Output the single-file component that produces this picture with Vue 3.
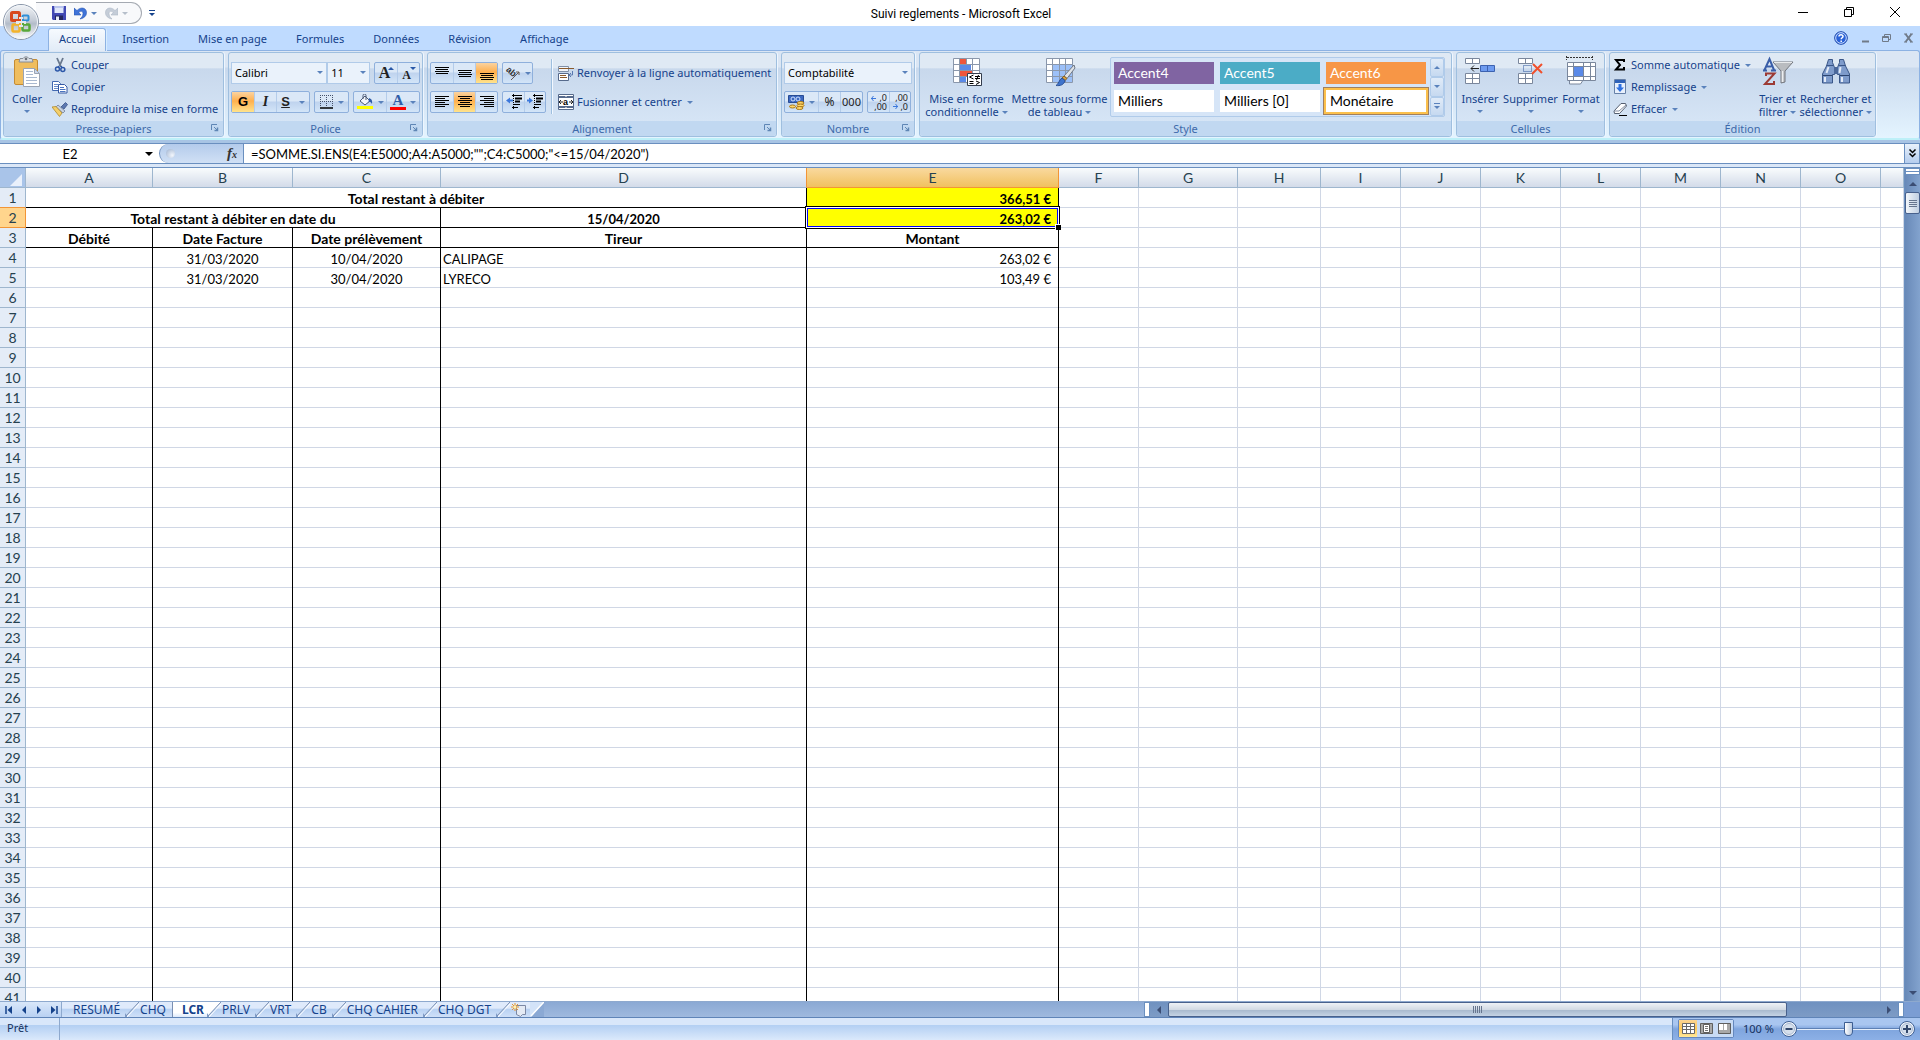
<script setup>
import { ref } from 'vue'

const ribbonTabs = ['Accueil', 'Insertion', 'Mise en page', 'Formules', 'Données', 'Révision', 'Affichage']
const activeTab = ref('Accueil')

const sheets = ['RESUMÉ', 'CHQ', 'LCR', 'PRLV', 'VRT', 'CB', 'CHQ CAHIER', 'CHQ DGT']
const activeSheet = ref('LCR')

const cellRef = ref('E2')
const formula = ref('=SOMME.SI.ENS(E4:E5000;A4:A5000;"";C4:C5000;"<=15/04/2020")')
const zoom = ref(50)

const columns = [
  { name: 'A', width: 127 },
  { name: 'B', width: 140 },
  { name: 'C', width: 148 },
  { name: 'D', width: 366 },
  { name: 'E', width: 252 },
  { name: 'F', width: 80 },
  { name: 'G', width: 99 },
  { name: 'H', width: 83 },
  { name: 'I', width: 80 },
  { name: 'J', width: 80 },
  { name: 'K', width: 80 },
  { name: 'L', width: 80 },
  { name: 'M', width: 80 },
  { name: 'N', width: 80 },
  { name: 'O', width: 80 }
]

const E = (text, cls) => ({ text, cls: 'vb ' + cls })

const content = {
  1: [
    { text: 'Total restant à débiter', span: 4, cls: 'b title c vb hb' },
    E('366,51 €', 'b r yellow hb')
  ],
  2: [
    { text: 'Total restant à débiter en date du', span: 3, cls: 'b title c vb hb' },
    { text: '15/04/2020', cls: 'b c vb hb' },
    { text: '263,02 €', cls: 'b r vb hb yellow', selected: true }
  ],
  3: ['Débité', 'Date Facture', 'Date prélèvement', 'Tireur', 'Montant'].map(text => ({ text, cls: 'b title c vb hb' })),
  4: [E('', ''), E('31/03/2020', 'c'), E('10/04/2020', 'c'), E('CALIPAGE', ''), E('263,02 €', 'r')],
  5: [E('', ''), E('31/03/2020', 'c'), E('30/04/2020', 'c'), E('LYRECO', ''), E('103,49 €', 'r')]
}

const rows = Array.from({ length: 41 }, (_, i) => {
  const n = i + 1
  const cells = content[n] || Array.from({ length: 5 }, () => E('', ''))
  return { n, cells: [...cells, ...Array.from({ length: 11 }, () => ({ text: '', cls: '' }))] }
})

const styles = [
  { name: 'Accent4', cls: 'accent4' },
  { name: 'Accent5', cls: 'accent5' },
  { name: 'Accent6', cls: 'accent6' },
  { name: 'Milliers', cls: '' },
  { name: 'Milliers [0]', cls: '' },
  { name: 'Monétaire', cls: 'chosen' }
]
</script>

<template>
  <div class="window">
    <header class="titlebar">
      <div class="quick">
        <button class="plain" aria-label="Enregistrer">
          <svg width="14" height="14" viewBox="0 0 14 14"><path d="M0 0h14v14H1l-1-1z" fill="#4148b4" /><path d="M2.500 0h9v7h-9z" fill="#dfe6fa" /><path d="M2.500 0h9v2h-9z" fill="#b9c4ee" /><path d="M3 9.500h8V14H3z" fill="#23265e" /><path d="M4 10.500h3V14H4z" fill="#e8ecf8" /></svg>
        </button>
        <button class="plain undo" aria-label="Annuler">
          <svg width="13" height="14" viewBox="0 0 13 14"><path d="M0 2v7h7L4.800 6.600C6.500 4.500 9 5 9 7.500c0 2.500-1.500 4-3 5.500 4-.8 6.700-3 6.500-6.800C12.200 1.500 6.500.5 3 4.600z" fill="#3f73d8" stroke="#2a58b4" stroke-width=".6" /></svg>
          <span class="caret"></span>
        </button>
        <button class="plain undo dim" aria-label="Rétablir">
          <svg width="13" height="14" viewBox="0 0 13 14"><path d="M13 2v7H6l2.200-2.400C6.500 4.500 4 5 4 7.500c0 2.500 1.500 4 3 5.500C3 12.200.3 10 .5 6.200.8 1.500 6.500.5 10 4.600z" fill="#b9c3d0" stroke="#9aa8ba" stroke-width=".6" /></svg>
          <span class="caret"></span>
        </button>
      </div>
      <button class="plain customize" aria-label="Personnaliser"><span class="bar"></span><span class="caret"></span></button>
      <h1>Suivi reglements - Microsoft Excel</h1>
      <div class="winbtns">
        <button class="plain" aria-label="Réduire"><svg width="12" height="12"><path d="M1 6.500h10" stroke="#000" /></svg></button>
        <button class="plain" aria-label="Restaurer"><svg width="12" height="12"><path d="M1.500 3.500h7v7h-7zM3.500 3V1.500h7v7H9" fill="none" stroke="#000" /></svg></button>
        <button class="plain" aria-label="Fermer"><svg width="12" height="12"><path d="M1 1l10 10M11 1L1 11" stroke="#000" /></svg></button>
      </div>
    </header>

    <button class="office" aria-label="Bouton Office">
      <svg width="38" height="38" viewBox="0 0 38 38">
        <defs>
          <linearGradient id="orb" x1="0" y1="0" x2="0" y2="1"><stop offset="0" stop-color="#f3f5f8" /><stop offset=".45" stop-color="#c5ccd6" /><stop offset=".55" stop-color="#b3bcc9" /><stop offset="1" stop-color="#fff" /></linearGradient>
        </defs>
        <circle cx="19" cy="19" r="17.500" fill="url(#orb)" stroke="#8895a8" />
        <circle cx="19" cy="19" r="16.500" fill="none" stroke="#f2f5f9" />
        <g fill="none">
          <rect x="9.500" y="9.500" width="8" height="8" rx="1" stroke="#d8481c" stroke-width="3" />
          <rect x="20.500" y="12.500" width="6" height="5" rx="1" stroke="#2f8fd8" stroke-width="2" />
          <rect x="10.500" y="21.500" width="7" height="7" rx="1" stroke="#f3b32a" stroke-width="2.500" />
          <rect x="20.500" y="21.500" width="7" height="6" rx="1" stroke="#58a83a" stroke-width="2.500" />
        </g>
        <path d="M14 18h10v3H14z" fill="#e3e7ec" /><path d="M17 14h4v10h-4z" fill="#e3e7ec" />
        <path d="M17 16h2v2h-2z" fill="#d8481c" /><path d="M20 16h2v2h-2z" fill="#2f8fd8" /><path d="M17 20h2v2h-2z" fill="#f3b32a" /><path d="M20 20h2v2h-2z" fill="#58a83a" />
      </svg>
    </button>

    <nav class="tabs">
      <button v-for="t in ribbonTabs" :key="t" :class="['tab', { on: t === activeTab }]" @click="activeTab = t">{{ t }}</button>
      <div class="tabtools">
        <button class="plain" aria-label="Aide"><svg width="14" height="14" viewBox="0 0 14 14"><circle cx="7" cy="7" r="6.300" fill="#2a62d8" stroke="#1d47a8" /><circle cx="7" cy="7" r="5.300" fill="none" stroke="#cfe0ff" /><path d="M5 5.500C5 3.200 9.200 3.300 9 5.500 8.900 6.800 7.200 6.800 7.200 8.300M7.200 9.500v1.500" fill="none" stroke="#fff" stroke-width="1.500" /></svg></button>
        <button class="plain" aria-label="Réduire le classeur"><svg width="10" height="12"><path d="M2 9.500h7" stroke="#707a88" stroke-width="2" /></svg></button>
        <button class="plain" aria-label="Restaurer le classeur"><svg width="10" height="12"><path d="M.5 4.500h6v5h-6zM.5 5.500h6M2.500 4V2.500h6v5H7" fill="none" stroke="#707a88" /></svg></button>
        <button class="plain" aria-label="Fermer le classeur"><svg width="10" height="12"><path d="M1.500 2l6 8M7.500 2l-6 8" stroke="#707a88" stroke-width="2" /><path d="M0 2h3M6 2h3M0 10h3M6 10h3" stroke="#707a88" /></svg></button>
      </div>
    </nav>

    <section class="ribbon">
      <div class="group g-clip">
        <div class="body">
          <button class="big">
            <svg width="32" height="32" viewBox="0 0 32 32">
              <rect x="3.500" y="3.500" width="23" height="25" rx="1.500" fill="#efbd5e" stroke="#c48b33" />
              <path d="M9 2.500h3a3.500 3.500 0 0 1 6 0h3l1 3.500H8z" fill="#d9dde2" stroke="#858c96" />
              <circle cx="15" cy="3" r="1.300" fill="#6a7078" />
              <path d="M12.500 12.500h11l5 5v13h-16z" fill="#fff" stroke="#9aa4b4" /><path d="M23.500 12.500v5h5z" fill="#cdd8ea" stroke="#9aa4b4" />
              <path d="M15 15.500h7M15 18.500h7M15 21.500h11M15 24.500h11M15 27.500h11" stroke="#a9b9d0" />
            </svg>
            <span>Coller</span><span class="caret"></span>
          </button>
          <div class="stack">
            <button class="cmd"><svg width="16" height="16" viewBox="0 0 16 16"><path d="M5 1l4 9M11 1L7.500 9" stroke="#68778c" stroke-width="1.800" /><path d="M7 9l-1 2M9 9l1 2" stroke="#2c57a8" stroke-width="1.500" /><circle cx="5.500" cy="12" r="2" fill="none" stroke="#2c57a8" stroke-width="1.500" /><circle cx="10.800" cy="12.500" r="2" fill="none" stroke="#2c57a8" stroke-width="1.500" /></svg>Couper</button>
            <button class="cmd"><svg width="16" height="16" viewBox="0 0 16 16"><path d="M.5 2.500h6l2 2v7h-8z" fill="#fff" stroke="#4268b0" /><path d="M2 5.500h4M2 7.500h4M2 9.500h4" stroke="#6a8cc8" /><path d="M6.500 5.500h6l2.500 2.500v6H6.500z" fill="#fff" stroke="#3458a4" /><path d="M8 8.500h4M8 10.500h5.500M8 12.500h5.500" stroke="#4a74c0" /></svg>Copier</button>
            <button class="cmd"><svg width="16" height="16" viewBox="0 0 16 16"><path d="M9 6l4.500-4.500 2 2L12 8z" fill="#5d79b0" stroke="#3a5388" stroke-width=".8" /><path d="M6 4l7 6-2 2-7-6z" fill="#c9d3e2" stroke="#71809a" stroke-width=".8" /><path d="M0 6l4-.5L10 12l-2.500 3.500z" fill="#f4cf6a" stroke="#b08a2c" stroke-width=".8" /></svg>Reproduire la mise en forme</button>
          </div>
        </div>
        <footer>Presse-papiers<svg class="launch" width="8" height="8"><path d="M.5 6V.5H6" fill="none" stroke="#5f86b5" /><path d="M3 3l3 3" stroke="#5f86b5" /><path d="M3.500 6.500h3v-3" fill="none" stroke="#5f86b5" stroke-width="1.500" /></svg></footer>
      </div>

      <div class="group g-font">
        <div class="body lines">
          <div class="line">
            <label class="combo wide"><select aria-label="Police"><option>Calibri</option></select><span class="caret"></span></label>
            <label class="combo size"><select aria-label="Taille de police"><option>11</option></select><span class="caret"></span></label>
            <div class="set">
              <button class="w22 glyph big-a" aria-label="Agrandir la police">A<i class="up"></i></button>
              <button class="w22 glyph small-a" aria-label="Réduire la police">A<i class="down"></i></button>
            </div>
          </div>
          <div class="line">
            <div class="set">
              <button class="w22 hot bold">G</button>
              <button class="w22 ital">I</button>
              <button class="w34 under"><u>S</u><span class="caret"></span></button>
            </div>
            <div class="set">
              <button class="w34" aria-label="Bordures"><svg width="14" height="14"><path d="M.5 0v12M12.500 0v12M6.500 0v12M0 .5h13M0 6.500h13" stroke="#44506a" stroke-dasharray="1 1" /><path d="M0 13h13" stroke="#000" stroke-width="1.500" /></svg><span class="caret"></span></button>
            </div>
            <div class="set">
              <button class="w32" aria-label="Couleur de remplissage"><svg width="17" height="16" viewBox="0 0 17 16"><path d="M3 7l5-5 5 5-5 4z" fill="#f3f6fb" stroke="#4c5a74" /><path d="M6 5V1.500A1.500 1.500 0 0 1 9 1.500V6" fill="none" stroke="#4c5a74" /><path d="M12 4c3 1 3.500 3 3 6-1-1.500-2-2.500-3.500-2z" fill="#2f5da8" /><path d="M0 12h16v3H0z" fill="#ff0" /></svg><span class="caret"></span></button>
              <button class="w34" aria-label="Couleur de police"><span class="fcolor">A</span><span class="caret"></span></button>
            </div>
          </div>
        </div>
        <footer>Police<svg class="launch" width="8" height="8"><path d="M.5 6V.5H6" fill="none" stroke="#5f86b5" /><path d="M3 3l3 3" stroke="#5f86b5" /><path d="M3.500 6.500h3v-3" fill="none" stroke="#5f86b5" stroke-width="1.500" /></svg></footer>
      </div>

      <div class="group g-align">
        <div class="body">
          <div class="lines left">
            <div class="line">
              <div class="set">
                <button class="w22" aria-label="Aligner en haut"><svg width="14" height="16"><path d="M0 2.500h14M1 4.500h12M0 6.500h14M1 8.500h12" stroke="#000" /></svg></button>
                <button class="w22" aria-label="Aligner au centre"><svg width="14" height="16"><path d="M0 5.500h14M1 7.500h12M0 9.500h14M1 11.500h12" stroke="#000" /></svg></button>
                <button class="w22 hot" aria-label="Aligner en bas"><svg width="14" height="16"><path d="M0 8.500h14M1 10.500h12M0 12.500h14M1 14.500h12" stroke="#000" /></svg></button>
              </div>
              <div class="set">
                <button class="w30" aria-label="Orientation"><svg class="loose" width="16" height="16" viewBox="0 0 16 16"><text x="1" y="8" font-size="9" font-weight="bold" font-family="Liberation Sans, sans-serif" transform="rotate(40 4 6)" fill="#333">ab</text><path d="M6 15L14 7M14 7h-3M14 7v3" stroke="#6b5a50" fill="none" /></svg><span class="caret"></span></button>
              </div>
            </div>
            <div class="line">
              <div class="set">
                <button class="w22" aria-label="Aligner à gauche"><svg width="14" height="14"><path d="M0 1.500h14M0 3.500h10M0 5.500h14M0 7.500h10M0 9.500h14M0 11.500h10" stroke="#000" /></svg></button>
                <button class="w22 hot" aria-label="Centrer"><svg width="14" height="14"><path d="M0 1.500h14M2 3.500h10M0 5.500h14M2 7.500h10M0 9.500h14M2 11.500h10" stroke="#000" /></svg></button>
                <button class="w22" aria-label="Aligner à droite"><svg width="14" height="14"><path d="M0 1.500h14M4 3.500h10M0 5.500h14M4 7.500h10M0 9.500h14M4 11.500h10" stroke="#000" /></svg></button>
              </div>
              <div class="set">
                <button class="w21" aria-label="Diminuer le retrait"><svg width="16" height="16"><path d="M6 1.500h10M6 13.500h6M8 10.500h6" stroke="#000" /><path d="M9 4.500h7M9 7.500h5" stroke="#000" stroke-width="2" /><path d="M7.500 0v16" stroke="#000" stroke-dasharray="1 1" /><path d="M0 6.500l4-3v2h3v2H4v2z" fill="#3c78dc" /></svg></button>
                <button class="w21" aria-label="Augmenter le retrait"><svg width="16" height="16"><path d="M6 1.500h10M6 13.500h6M8 10.500h6" stroke="#000" /><path d="M9 4.500h7M9 7.500h5" stroke="#000" stroke-width="2" /><path d="M7.500 0v16" stroke="#000" stroke-dasharray="1 1" /><path d="M6 6.500l-4-3v2H0v2h2v2z" fill="#3c78dc" /></svg></button>
              </div>
            </div>
          </div>
          <span class="vsep"></span>
          <div class="lines">
            <button class="cmd"><svg width="16" height="16"><path d="M.5 1.500h10v5H.5z" fill="#f2f5fa" stroke="#8090a8" /><path d="M1 3.500h15" stroke="#8a5a2c" /><path d="M.5 8.500h10v7H.5z" fill="#fff" stroke="#566a8c" /><path d="M2 10.500h6M2 12.500h7" stroke="#8a5a2c" /><path d="M14.500 6v4h-3M13 8l-2 2 2 2" fill="none" stroke="#5878b0" /></svg>Renvoyer à la ligne automatiquement</button>
            <button class="cmd"><svg width="16" height="16"><path d="M.5.500h15v15H.5z" fill="#fff" stroke="#566a8c" /><path d="M0 3h16M0 13h16" stroke="#566a8c" stroke-width="2" /><path d="M8 1v2M8 13v2" stroke="#fff" /><path d="M1 8h4M11 8h4M3 6L1 8l2 2M13 6l2 2-2 2" fill="none" stroke="#222" /><text x="5" y="11" font-size="9" font-weight="bold" font-family="Liberation Sans, sans-serif">a</text></svg>Fusionner et centrer<span class="caret"></span></button>
          </div>
        </div>
        <footer>Alignement<svg class="launch" width="8" height="8"><path d="M.5 6V.5H6" fill="none" stroke="#5f86b5" /><path d="M3 3l3 3" stroke="#5f86b5" /><path d="M3.500 6.500h3v-3" fill="none" stroke="#5f86b5" stroke-width="1.500" /></svg></footer>
      </div>

      <div class="group g-num">
        <div class="body lines">
          <div class="line">
            <label class="combo full"><select aria-label="Format de nombre"><option>Comptabilité</option></select><span class="caret"></span></label>
          </div>
          <div class="line">
            <div class="set">
              <button class="w34" aria-label="Format Nombre Comptabilité"><svg width="17" height="16"><path d="M.5 1.500h15v7H.5z" fill="#3c68c0" stroke="#284c94" /><circle cx="5" cy="5" r="2" fill="none" stroke="#cfe0ff" /><circle cx="10" cy="5" r="2" fill="none" stroke="#cfe0ff" /><ellipse cx="12.500" cy="9" rx="3.500" ry="1.500" fill="#ffd76a" stroke="#a87718" /><ellipse cx="12.500" cy="11.500" rx="3.500" ry="1.500" fill="#ffd76a" stroke="#a87718" /><ellipse cx="4.500" cy="12.500" rx="3" ry="1.500" fill="#ffd76a" stroke="#a87718" /><ellipse cx="11.500" cy="14" rx="3.500" ry="1.500" fill="#ffd76a" stroke="#a87718" /></svg><span class="caret"></span></button>
              <button class="w22 pct">%</button>
              <button class="w22 zeros">000</button>
            </div>
            <div class="set">
              <button class="w21 dec" aria-label="Ajouter une décimale"><svg class="arr" width="5" height="5"><path d="M0 2.500h5M2.500 0L.5 2.500 2.500 5" stroke="#3c78dc" fill="none" /></svg><span>,0</span><span>,00</span></button>
              <button class="w21 dec" aria-label="Réduire les décimales"><span>,00</span><span>,0</span><svg class="arr low" width="5" height="5"><path d="M0 2.500h5M2.500 0l2 2.500-2 2.500" stroke="#3c78dc" fill="none" /></svg></button>
            </div>
          </div>
        </div>
        <footer>Nombre<svg class="launch" width="8" height="8"><path d="M.5 6V.5H6" fill="none" stroke="#5f86b5" /><path d="M3 3l3 3" stroke="#5f86b5" /><path d="M3.500 6.500h3v-3" fill="none" stroke="#5f86b5" stroke-width="1.500" /></svg></footer>
      </div>

      <div class="group g-style">
        <div class="body">
          <button class="big w92">
            <svg width="32" height="32" viewBox="0 0 32 32">
              <path d="M2.500 2.500h26v24h-26z" fill="#fff" stroke="#8a97ab" />
              <path d="M9 3h6v5H9zM9 14h12v6H9z" fill="#f0563c" /><path d="M9 8h11v6H9zM9 20h6v6H9z" fill="#5b8ae8" />
              <path d="M2 8.500h27M2 14.500h27M2 20.500h27M8.500 2v25M15.500 2v6M21.500 2v25" stroke="#8a97ab" />
              <path d="M16.500 17.500h14v12h-14z" fill="#fff" stroke="#333c4c" />
              <path d="M22.500 19l-4 2 4 2M18.500 25.500h4M18.500 27.500h4M24 20.500h5M24 22.500h5M27.500 19l-2 5M25 25l3.500 1.500L25 28.500" fill="none" stroke="#000" />
            </svg>
            <span>Mise en forme</span><span>conditionnelle<i class="caret"></i></span>
          </button>
          <button class="big w92">
            <svg width="32" height="32" viewBox="0 0 32 32">
              <path d="M2.500 2.500h26v24h-26z" fill="#fff" stroke="#8a97ab" />
              <path d="M9 8h19v18H9z" fill="#9cc0f8" />
              <path d="M2 8.500h27M2 14.500h27M2 20.500h27M8.500 2v25M15.500 2v25M21.500 2v25" stroke="#8a97ab" />
              <path d="M30 9L20 20l3 2.500L31 12z" fill="#dfe3e8" stroke="#6d7684" /><path d="M20 20l3 2.500-2 2-3-2.500z" fill="#d9a040" stroke="#8b6420" /><path d="M18 22l3 2.500C20 29 16 30 12 29.500c3-1.500 3-6 6-7.500z" fill="#3f74cc" stroke="#2a5098" />
            </svg>
            <span>Mettre sous forme</span><span>de tableau<i class="caret"></i></span>
          </button>
          <div class="gallery">
            <div class="swatches">
              <button v-for="s in styles" :key="s.name" :class="['swatch', s.cls]">{{ s.name }}</button>
            </div>
            <div class="gscroll">
              <button aria-label="Ligne précédente"><i class="caret flip"></i></button>
              <button aria-label="Ligne suivante"><i class="caret"></i></button>
              <button aria-label="Autres styles"><i class="bar"></i><i class="caret"></i></button>
            </div>
          </div>
        </div>
        <footer>Style</footer>
      </div>

      <div class="group g-cells">
        <div class="body">
          <button class="big">
            <svg width="32" height="32" viewBox="0 0 32 32"><path d="M1.500 2.500h14v5h-14zM8.500 2.500v5M1.500 17.500h14v10h-14zM1.500 22.500h14M8.500 17.500v10" fill="#fff" stroke="#7a879c" /><path d="M16.500 9.500h14v6h-14z" fill="#6d9bf0" stroke="#3c62b0" /><path d="M23.500 9.500v6" stroke="#3c62b0" /><path d="M7 12.500h8M10 9.500l-3 3 3 3" fill="none" stroke="#222" /></svg>
            <span>Insérer</span><span class="caret"></span>
          </button>
          <button class="big">
            <svg width="32" height="32" viewBox="0 0 32 32"><path d="M3.500 2.500h14v5h-14zM10.500 2.500v5M3.500 17.500h14v10h-14zM3.500 22.500h14M10.500 17.500v10" fill="#fff" stroke="#7a879c" /><path d="M8.500 9.500h8v6h-8z" fill="none" stroke="#2a5098" stroke-dasharray="1 1" /><path d="M18 8l9 9M27 8l-10 10" stroke="#f0502c" stroke-width="2" /></svg>
            <span>Supprimer</span><span class="caret"></span>
          </button>
          <button class="big">
            <svg width="32" height="32" viewBox="0 0 32 32"><path d="M1.500 0v4M27.500 0v4M2 1.500h26" stroke="#333" stroke-dasharray="2 1" /><path d="M2.500 6.500h28v18h-28z" fill="#fff" stroke="#7a879c" /><path d="M2 10.500h29M2 20.500h29M8.500 6v19M18.500 6v19M25.500 6v19" stroke="#7a879c" /><path d="M9 11h9v9H9z" fill="#5b8ae8" /><path d="M4.500 25v3h11l2-3" fill="#fff" stroke="#7a879c" /></svg>
            <span>Format</span><span class="caret"></span>
          </button>
        </div>
        <footer>Cellules</footer>
      </div>

      <div class="group g-edit">
        <div class="body">
          <div class="stack">
            <button class="cmd"><svg width="16" height="16"><path d="M12 5V3H4l4 5-4 4.500h8V10" fill="none" stroke="#000" stroke-width="2" /></svg>Somme automatique<span class="caret"></span></button>
            <button class="cmd"><svg width="16" height="16"><path d="M2.500.500h11v14h-11z" fill="#e8f0fc" stroke="#6680a8" /><path d="M3 1h10v3H3z" fill="#2f62b8" /><path d="M6.500 5v3.500H4L8 13l4-4.500H9.500V5z" fill="#2f70e0" /></svg>Remplissage<span class="caret"></span></button>
            <button class="cmd"><svg width="16" height="16"><path d="M2 10l7-7.500h4.500l1 2.500-7 7.500H2.500z" fill="#fff" stroke="#555f70" /><path d="M2 10h5l7-6" fill="none" stroke="#8590a4" /><path d="M7 14.500h8" stroke="#000" /></svg>Effacer<span class="caret"></span></button>
          </div>
          <button class="big">
            <svg width="32" height="32" viewBox="0 0 32 32"><path d="M1 14.500h4M9 14.500h5M2.500 14L7.500 3l4.500 11M4.500 10.500h5" fill="none" stroke="#3a5ea8" stroke-width="2" /><path d="M4 20v-2.500h8.500L3 28h9v-3" fill="none" stroke="#9c3a34" stroke-width="2" /><path d="M11 6h20l-8 9v11l-4 1V15z" fill="#b9bcc0" stroke="#73777e" /><path d="M12 6.500h18" stroke="#e8eaec" /><path d="M20.500 15v11" stroke="#eceef0" stroke-width="1.500" /></svg>
            <span>Trier et</span><span>filtrer<i class="caret"></i></span>
          </button>
          <button class="big">
            <svg width="32" height="32" viewBox="0 0 32 32">
              <path d="M8.500 3.500h4v3l2 5v7h-2v8.500h-10V18l4-8zM23.500 3.500h-4v3l-2 5v7h2v8.500h10V18l-4-8z" fill="#7e9bcb" stroke="#3a5688" />
              <path d="M14 11h4v7h-4z" fill="#4a679a" />
              <path d="M3 19.500h9M20 19.500h9" stroke="#2c4470" /><path d="M6.500 9.500h7M18.500 9.500h7" stroke="#3a5688" />
              <path d="M5 21v5M22 21v5M8.500 11l-2 6M20.500 11l-1 6" stroke="#e2eaf7" stroke-width="2" />
            </svg>
            <span>Rechercher et</span><span>sélectionner<i class="caret"></i></span>
          </button>
        </div>
        <footer>Édition</footer>
      </div>
    </section>

    <section class="fbar">
      <div class="namebox"><input v-model="cellRef" aria-label="Zone Nom" /><span class="caret black"></span></div>
      <div class="fxzone"><span class="knob"></span><button class="plain fx" aria-label="Insérer une fonction">f<small>x</small></button></div>
      <input v-model="formula" class="formula" aria-label="Barre de formule" />
      <button class="expand" aria-label="Développer la barre de formule"><svg width="9" height="9"><path d="M1.500.500l3 3 3-3M1.500 4.500l3 3 3-3" fill="none" stroke="#000" stroke-width="1.500" /></svg></button>
    </section>

    <main class="sheet">
      <div class="grid">
        <table>
          <colgroup>
            <col class="c-head" />
            <col v-for="c in columns" :key="c.name" :style="{ width: c.width + 'px' }" />
            <col />
          </colgroup>
          <thead>
            <tr>
              <th class="corner"><svg width="12" height="12"><path d="M12 0v12H0z" fill="#e9f0fb" /></svg></th>
              <th v-for="c in columns" :key="c.name" :class="{ sel: c.name === 'E', pre: c.name === 'D' }">{{ c.name }}</th>
              <th></th>
            </tr>
          </thead>
          <tbody>
            <tr v-for="row in rows" :key="row.n">
              <th :class="{ sel: row.n === 2, pre: row.n === 1 }">{{ row.n }}</th>
              <td v-for="(cell, i) in row.cells" :key="i" :colspan="cell.span || 1" :class="cell.cls">{{ cell.text }}<span v-if="cell.selected" class="cursor"></span></td>
            </tr>
          </tbody>
        </table>
      </div>
      <div class="vscroll">
        <span class="split"></span>
        <button class="arrow" aria-label="Vers le haut"><i class="tri up"></i></button>
        <span class="thumb"><i></i><i></i><i></i><i></i></span>
        <span class="track"></span>
        <button class="arrow" aria-label="Vers le bas"><i class="tri down"></i></button>
      </div>
    </main>

    <section class="bottom">
      <div class="navs">
        <button class="plain" aria-label="Première feuille"><svg width="8" height="8"><path d="M1 0v8" stroke="#15428b" stroke-width="1.500" /><path d="M7 0v8L2.500 4z" fill="#15428b" /></svg></button>
        <button class="plain" aria-label="Feuille précédente"><svg width="8" height="8"><path d="M6 0v8L2 4z" fill="#15428b" /></svg></button>
        <button class="plain" aria-label="Feuille suivante"><svg width="8" height="8"><path d="M2 0v8l4-4z" fill="#15428b" /></svg></button>
        <button class="plain" aria-label="Dernière feuille"><svg width="8" height="8"><path d="M7 0v8" stroke="#15428b" stroke-width="1.500" /><path d="M1 0v8l4.500-4z" fill="#15428b" /></svg></button>
      </div>
      <div class="sheets">
        <template v-for="(s, i) in sheets" :key="s">
          <button :class="['stab', { on: s === activeSheet }]" @click="activeSheet = s">{{ s }}</button>
          <svg v-if="sheets[i + 1] !== activeSheet" :class="['slash', { lit: s === activeSheet }]" width="14" height="15"><path class="fill" d="M0 0h14L1 14H0z" /><path d="M-2 15h5L0 11z" fill="#7f9cc8" /><path d="M1 14L14 0" stroke="#7a8fb2" /><path d="M2 15L14 2" stroke="#fff" /></svg>
          <span v-else class="edge"></span>
        </template>
        <button class="stab new" aria-label="Insérer une feuille"><svg width="16" height="14"><path d="M5.500 2.500h9v9h-3l-2 2-4-2z" fill="#e4eaf4" stroke="#7c88a4" /><path d="M4 0v8M0 4h8M1 1l6 6M7 1L1 7" stroke="#e8962a" /><circle cx="4" cy="4" r="1.500" fill="#fff3b0" /></svg></button>
        <svg class="tail" width="14" height="15"><path d="M0 0h14L1 15H0z" fill="#d3e3f8" /><path d="M1 14L14 0" stroke="#fff" stroke-width="1.500" /></svg>
      </div>
      <div class="hscroll">
        <span class="split"></span>
        <button class="arrow" aria-label="Vers la gauche"><i class="tri left"></i></button>
        <div class="htrack"><span class="hthumb"><i></i><i></i><i></i><i></i><i></i></span></div>
        <button class="arrow" aria-label="Vers la droite"><i class="tri right"></i></button>
        <span class="split"></span>
      </div>
      <span class="nook"></span>
    </section>

    <footer class="status">
      <span class="ready">Prêt</span>
      <div class="view">
        <div class="modes">
          <button class="on" aria-label="Normal"><svg width="13" height="11"><path d="M.5.500h12v10H.5z" fill="#fff" stroke="#6a6a6a" /><path d="M0 3.500h13M0 6.500h13M4.500 0v11M8.500 0v11" stroke="#6a6a6a" /></svg></button>
          <button aria-label="Mise en page"><svg width="13" height="11"><path d="M.5.500h12v10H.5z" fill="#a8a8a8" stroke="#5f5f5f" /><path d="M3.500 1.500h6v8h-6z" fill="#fff" stroke="#5f5f5f" /><path d="M5 3.500h3M5 5.500h3M5 7.500h3" stroke="#777" /></svg></button>
          <button aria-label="Aperçu des sauts de page"><svg width="13" height="11"><path d="M.5.500h12v10H.5z" fill="#a8a8a8" stroke="#5f5f5f" /><path d="M1 1h4v6H1zM6 1h3v6H6z" fill="#fff" /></svg></button>
        </div>
        <span class="pct-label">100 %</span>
        <button class="round" aria-label="Zoom arrière"><svg width="16" height="16"><circle cx="8" cy="8" r="7.500" fill="#f3f6fb" stroke="#3d5e92" /><circle cx="8" cy="8" r="5.500" fill="#d5dfec" stroke="#a9bad2" /><path d="M4.500 8h7" stroke="#33486c" stroke-width="2" /></svg></button>
        <input v-model="zoom" type="range" min="0" max="100" aria-label="Zoom" />
        <button class="round" aria-label="Zoom avant"><svg width="16" height="16"><circle cx="8" cy="8" r="7.500" fill="#f3f6fb" stroke="#3d5e92" /><circle cx="8" cy="8" r="5.500" fill="#d5dfec" stroke="#a9bad2" /><path d="M4 8h8M8 4v8" stroke="#33486c" stroke-width="2" /></svg></button>
      </div>
    </footer>
  </div>
</template>

<style>
html,
body,
#app {
  height: 100%;
}
body {
  margin: 0;
  overflow: hidden;
}
</style>

<style scoped>
* {
  box-sizing: border-box;
}
.window {
  position: relative;
  display: flex;
  flex-direction: column;
  height: 100%;
  background: #bfdbff;
  color: #15428b;
  font: 11px/14px "Noto Sans", "Open Sans", sans-serif;
}
button,
input,
select {
  margin: 0;
  padding: 0;
  border: 0;
  background: none;
  color: inherit;
  font: inherit;
}
svg {
  display: block;
  flex: none;
}
.loose {
  overflow: visible;
}
.plain {
  display: flex;
  align-items: center;
  justify-content: center;
}
.caret {
  display: inline-block;
  flex: none;
  width: 0;
  height: 0;
  border: 3px solid transparent;
  border-top-color: #5a82bc;
  border-bottom: 0;
}
.caret.flip {
  transform: rotate(180deg);
}

/* title bar */
.titlebar {
  display: flex;
  align-items: center;
  flex: none;
  height: 26px;
  background: #fff;
}
.quick {
  display: flex;
  align-items: center;
  gap: 8px;
  width: 106px;
  height: 22px;
  margin-left: 36px;
  padding-left: 16px;
  border: 1px solid #a5aab2;
  border-left: 0;
  border-radius: 0 11px 11px 0;
  background: #f8f9fb;
}
.undo {
  gap: 4px;
}
.dim {
  opacity: 0.8;
}
.dim .caret {
  border-top-color: #a6b1c0;
}
.customize {
  flex-direction: column;
  gap: 2px;
  width: 20px;
}
.bar {
  width: 6px;
  height: 1px;
  background: #5a82bc;
}
.customize .bar {
  background: #15428b;
}
.customize .caret {
  border-top-color: #15428b;
}
h1 {
  flex: 1;
  margin: 0;
  padding: 2px 0 0 2px;
  color: #000;
  font: 12px/20px Roboto, sans-serif;
  text-align: center;
}
.winbtns {
  display: flex;
  gap: 34px;
  width: 162px;
  padding: 0 19px 2px 0;
  justify-content: flex-end;
}
.office {
  position: absolute;
  z-index: 2;
  top: 3px;
  left: 2px;
}

/* ribbon tabs */
.tabs {
  display: flex;
  flex: none;
  align-items: flex-end;
  gap: 1px;
  height: 24px;
  padding: 0 6px 0 48px;
}
.tab {
  height: 22px;
  padding: 0 13px 2px;
  border: 1px solid transparent;
  border-bottom: 0;
}
.tab.on {
  position: relative;
  z-index: 1;
  height: 23px;
  margin: 0 1px -1px 0;
  border-color: #8db2e3;
  border-radius: 3px 3px 0 0;
  padding: 0 10px 3px;
  background: linear-gradient(#f6fafe, #e1ebf7);
  box-shadow: 1px 0 0 #d6ecff;
}
.tabtools {
  display: flex;
  gap: 12px;
  align-self: center;
  margin-left: auto;
}

/* ribbon */
.ribbon {
  display: flex;
  flex: none;
  gap: 4px;
  height: 90px;
  padding: 1px 2px 2px;
  border: 1px solid #8db2e3;
  border-bottom: 2px solid #bdf0f8;
  border-radius: 3px;
  background: linear-gradient(#dbe6f4 0 18%, #c9d9ed 20%, #e4f4ff);
}
.group {
  display: flex;
  flex-direction: column;
  flex: none;
  height: 85px;
  border: 1px solid #9fbfdf;
  border-radius: 3px;
  background: linear-gradient(#dfe9f4 0 18%, #c8d8ec 19%, #d9e8f8);
  box-shadow: 1px 0 0 #eef6ff;
}
.group footer {
  position: relative;
  height: 15px;
  border-radius: 0 0 3px 3px;
  background: #c1d8f1;
  color: #3e6aaa;
  line-height: 15px;
  text-align: center;
}
.launch {
  position: absolute;
  top: 3px;
  right: 4px;
}
.g-clip { width: 221px; }
.g-font { width: 195px; }
.g-align { width: 350px; }
.g-num { width: 134px; }
.g-style { width: 533px; }
.g-cells { width: 149px; }
.g-edit { width: 267px; }
.body {
  display: flex;
  flex: 1;
  min-height: 0;
  padding: 0 2px;
}
.big {
  display: flex;
  flex-direction: column;
  align-items: center;
  min-width: 42px;
  padding: 3px 1px 0;
  line-height: 13px;
  white-space: nowrap;
}
.big svg {
  margin-bottom: 4px;
}
.big > .caret {
  margin-top: 5px;
}
.big span .caret {
  margin: 0 0 2px 3px;
}
.w92 {
  width: 93px;
}
.stack {
  display: flex;
  flex-direction: column;
  padding-top: 1px;
}
.cmd {
  display: flex;
  align-items: center;
  gap: 3px;
  height: 22px;
  white-space: nowrap;
}
.cmd .caret {
  margin-left: 2px;
}
.lines {
  display: flex;
  flex-direction: column;
  gap: 7px;
  padding-top: 9px;
}
.lines.left {
  width: 121px;
}
.line {
  display: flex;
  gap: 4px;
  height: 22px;
}
.vsep {
  height: 55px;
  margin: 6px 5px 0 0;
  border-left: 1px solid #9ebfdf;
  border-right: 1px solid #f2f8ff;
}
.g-clip .stack {
  margin-left: 4px;
}
.combo {
  position: relative;
  display: flex;
  height: 22px;
}
.combo select {
  width: 100%;
  padding: 0 3px;
  border: 1px solid #b1cbe9;
  background: #eaf2fb;
  color: #000;
  appearance: none;
}
.combo .caret {
  position: absolute;
  top: 9px;
  right: 4px;
}
.wide { width: 97px; }
.size { width: 43px; margin-left: -4px; }
.full { width: 128px; }
.set {
  display: flex;
  border: 1px solid #8fb0dc;
  border-radius: 2px;
  background: linear-gradient(#dbe8f7 45%, #bfd3ee 50%, #d3e5f8);
}
.set button {
  display: flex;
  align-items: center;
  justify-content: center;
  gap: 4px;
  height: 20px;
  color: #222;
}
.set button + button {
  border-left: 1px solid #b4ccea;
}
.w21 { width: 21px; }
.w22 { width: 22px; }
.w30 { width: 29px; }
.w32 { width: 32px; }
.w34 { width: 33px; }
.set .hot {
  background: linear-gradient(#fbd3a0, #ffb04e 45%, #ffe38c);
}
.set .bold {
  color: #000;
  font: bold 13px/20px "Liberation Sans", sans-serif;
}
.set .ital {
  font: italic bold 14px/20px "Liberation Serif", serif;
}
.set .under {
  gap: 9px;
  font: bold 13px/20px "Liberation Sans", sans-serif;
}
.set .glyph {
  position: relative;
  font-family: "Liberation Serif", serif;
  font-weight: bold;
}
.set .big-a {
  padding-right: 3px;
  font-size: 16px;
}
.set .small-a {
  padding: 3px 4px 0 0;
  font-size: 12px;
}
.glyph i {
  position: absolute;
  top: 4px;
  right: 3px;
  border: 3px solid transparent;
}
.glyph .up {
  border-top: 0;
  border-bottom-color: #2a58a8;
}
.glyph .down {
  border-bottom: 0;
  border-top-color: #2a58a8;
}
.fcolor {
  width: 16px;
  height: 16px;
  border-bottom: 3px solid #f00;
  color: #2f5da8;
  font: bold 15px/13px "Liberation Serif", serif;
  text-align: center;
}
.set .pct {
  font-size: 12px;
}
.set .dec {
  position: relative;
  flex-direction: column;
  align-items: flex-end;
  gap: 0;
  padding-right: 2px;
  font-size: 9px;
  line-height: 9px;
}
.arr {
  position: absolute;
  top: 4px;
  left: 3px;
}
.arr.low {
  top: 12px;
}

/* style gallery */
.gallery {
  display: flex;
  height: 60px;
  margin: 4px 0 0 auto;
  border: 1px solid #b0cbea;
  border-radius: 2px;
  background: #d6e5f7;
}
.g-style .body {
  padding: 0 6px 0 0;
}
.swatches {
  display: grid;
  grid-template-columns: repeat(3, 97px);
  gap: 6px;
  padding: 4px 3px;
}
.swatch {
  height: 22px;
  padding-left: 4px;
  background: #fff;
  color: #000;
  font: 14px/20px Lato, Carlito, sans-serif;
  text-align: left;
}
.swatches {
  grid-template-columns: repeat(3, 100px);
}
.accent4 { background: #8064a2; color: #fff; }
.accent5 { background: #4bacc6; color: #fff; }
.accent6 { background: #f79646; color: #fff; }
.chosen {
  box-shadow: 0 0 0 2px #fbc04c, 0 0 0 3px #a08060;
}
.gscroll {
  display: flex;
  flex-direction: column;
  margin-left: 1px;
}
.gscroll button {
  display: flex;
  flex: 1;
  flex-direction: column;
  align-items: center;
  justify-content: center;
  gap: 2px;
  width: 14px;
  border: 1px solid #b0cbea;
  border-radius: 2px;
  background: linear-gradient(#e0ebf8, #c6d9f0);
}
.g-cells .body {
  justify-content: space-between;
}
.g-edit .stack {
  width: 145px;
}

/* formula bar */
.fbar {
  display: flex;
  flex: none;
  height: 24px;
  margin-top: 3px;
  border-top: 1px solid #6a8fbf;
  background: #fff;
  color: #000;
  font: 13px/20px Lato, Carlito, sans-serif;
  box-shadow: 0 -3px 0 #a8c4e4, inset 0 -3px 0 #dbe7f7, inset 0 -4px 0 #6a8fbf;
}
.namebox {
  display: flex;
  align-items: center;
  width: 159px;
  height: 20px;
}
.namebox input {
  flex: 1;
  min-width: 0;
  padding-right: 5px;
  text-align: center;
}
.caret.black {
  margin-right: 6px;
  border-width: 4px 4px 0;
  border-top-color: #000;
}
.fxzone {
  display: flex;
  align-items: center;
  justify-content: space-between;
  width: 85px;
  height: 19px;
  padding: 0 6px;
  border-left: 1px solid #7191bd;
  border-right: 1px solid #6a8fbf;
  border-radius: 10px 0 0 10px;
  background: linear-gradient(#b4cbeb, #d0e0f5);
}
.knob {
  width: 9px;
  height: 9px;
  border-radius: 50%;
  background: radial-gradient(circle at 70% 70%, #f2f6fc, #9db1cf);
}
.fx {
  align-items: baseline;
  color: #333;
  font: italic bold 15px/18px "Liberation Serif", serif;
}
.fx small {
  font-size: 10px;
}
.formula {
  flex: 1;
  height: 19px;
  padding-left: 7px;
}
.expand {
  display: flex;
  align-items: center;
  justify-content: center;
  width: 16px;
  height: 19px;
  border: 1px solid #6a8fbf;
  border-top: 0;
  border-bottom: 0;
  background: linear-gradient(#e9f1fb, #b5cdee);
}

/* worksheet */
.sheet {
  display: flex;
  flex: 1;
  min-height: 0;
  border-top: 1px solid #6a8fbf;
  background: #fff;
}
.grid {
  flex: 1;
  min-width: 0;
  overflow: hidden;
}
table {
  width: 100%;
  border-spacing: 0;
  table-layout: fixed;
  color: #000;
  font: 13px/18px Lato, Carlito, sans-serif;
}
.c-head {
  width: 26px;
}
th,
td {
  height: 20px;
  padding: 0;
  white-space: nowrap;
}
td {
  padding: 1px 2px 0;
  border-right: 1px solid #d0d7e5;
  box-shadow: inset 0 -1px 0 #d0d7e5;
}
th {
  padding-top: 1px;
  border-right: 1px solid #9eb6ce;
  border-bottom: 1px solid #9eb6ce;
  background: #e4ecf7;
  color: #26414f;
  font-weight: normal;
}
thead th {
  background: linear-gradient(#f9fcfd, #d3dbe9);
  font-size: 14px;
}
th.corner {
  background: #a9c4e9;
}
.corner svg {
  margin: 3px 0 0 10px;
}
tbody th {
  font-size: 14px;
}
thead th.sel {
  background: linear-gradient(#f9d99f, #f1c15f);
}
tbody th.sel {
  background: #ffd58d;
}
th.sel {
  border-color: #f29536;
}
thead th.pre {
  border-right-color: #f29536;
}
tbody th.pre {
  border-bottom-color: #f29536;
}
.vb {
  border-right-color: #000;
}
.hb {
  box-shadow: inset 0 -1px 0 #000;
}
.b {
  font-weight: bold;
}
.title {
  font-size: 14px;
}
.c {
  text-align: center;
}
.r {
  padding-right: 7px;
  text-align: right;
}
.yellow {
  position: relative;
  background: #ff0;
}
.cursor {
  position: absolute;
  z-index: 1;
  inset: -2px -2px -1px;
  border: 1px solid #000;
  box-shadow: inset 0 0 0 1px #fff, inset 0 0 0 2px #00f;
}
.cursor::after {
  content: "";
  position: absolute;
  right: -2px;
  bottom: -2px;
  width: 5px;
  height: 5px;
  border: 1px solid #fff;
  border-width: 1px 0 0 1px;
  background: #000;
}

/* scroll bars */
.vscroll {
  display: flex;
  flex-direction: column;
  width: 16px;
  border-left: 1px solid #6a8fbf;
  background: linear-gradient(90deg, #6889b8, #83a3ce);
}
.vscroll .split {
  height: 7px;
  border: 1px solid #6a8fbf;
  background: linear-gradient(#fff 40%, #6a8fbf 40% 60%, #fff 60%);
}
.arrow {
  display: flex;
  flex: none;
  align-items: center;
  justify-content: center;
  width: 15px;
  height: 17px;
}
.tri {
  border: 4px solid transparent;
}
.tri.up {
  border-top: 0;
  border-bottom-color: #3b4d73;
}
.tri.down {
  border-bottom: 0;
  border-top-color: #3b4d73;
}
.tri.left {
  border-left: 0;
  border-right-color: #3b4d73;
}
.tri.right {
  border-right: 0;
  border-left-color: #3b4d73;
}
.thumb {
  display: flex;
  flex-direction: column;
  align-items: center;
  justify-content: center;
  gap: 1px;
  height: 22px;
  border: 1px solid #48618c;
  border-radius: 2px;
  background: linear-gradient(90deg, #f2f6fa, #c0cfe2);
}
.thumb i {
  width: 8px;
  height: 1px;
  background: #66758e;
}
.track {
  flex: 1;
}

/* sheet tabs */
.bottom {
  display: flex;
  flex: none;
  height: 17px;
  border-top: 1px solid #8ea9ce;
  border-bottom: 1px solid #5f84b8;
  background: linear-gradient(#8ba9d4, #9fb9de);
}
.navs {
  display: flex;
  align-items: center;
  width: 62px;
  padding-left: 5px;
  gap: 7px;
  background: linear-gradient(#d9e7fa, #b9d1f2);
  border-right: 1px solid #8ea9ce;
}
.sheets {
  display: flex;
  background: linear-gradient(#dfeafb 40%, #b9d2f3 50%, #cfe0f8);
}
.stab {
  padding: 0 5px 0 1px;
  font-size: 12px;
  line-height: 14px;
}
.stab:first-child {
  padding-left: 11px;
}
.stab.on {
  padding: 0 3px 0 9px;
  background: linear-gradient(#fff 70%, #dce9fb);
  font-weight: bold;
}
.stab.new {
  padding: 0 3px 0 1px;
}
.slash .fill {
  fill: none;
}
.slash.lit .fill {
  fill: #fff;
}
.edge {
  width: 2px;
  border-right: 1px solid #7a8fb2;
}
.tail {
  background: #8ba9d4;
}
.hscroll {
  display: flex;
  width: 39.6%;
  margin-left: auto;
  background: linear-gradient(#6f91c0, #7d9bc5);
}
.hscroll .split {
  width: 6px;
  border: 1px solid #6a8fbf;
  background: linear-gradient(90deg, #fff 40%, #6a8fbf 40% 60%, #fff 60%);
}
.hscroll .arrow {
  width: 18px;
  height: 15px;
}
.htrack {
  flex: 1;
}
.hthumb {
  display: flex;
  align-items: center;
  justify-content: center;
  gap: 1px;
  width: 87%;
  height: 15px;
  border: 1px solid #48618c;
  border-radius: 2px;
  background: linear-gradient(#eef2f6, #d2dae4 50%, #a9bace 55%, #c5d3e4);
}
.hthumb i {
  width: 1px;
  height: 7px;
  background: #66758e;
}
.nook {
  width: 16px;
  background: #7b9dd3;
}

/* status bar */
.status {
  display: flex;
  flex: none;
  height: 22px;
  background: linear-gradient(#d9e7fa 30%, #b3cff3 32%, #dbe9fb);
  color: #15315f;
}
.ready {
  width: 60px;
  padding: 3px 0 0 7px;
  border-right: 1px solid #8ea9ce;
}
.view {
  display: flex;
  align-items: center;
  width: 248px;
  margin-left: auto;
  padding: 0 5px 1px;
  border-left: 1px solid #6a8fbf;
  background: linear-gradient(#a9c6f0 30%, #7fa5de 50%, #8cb0e6);
}
.modes {
  display: flex;
  border: 1px solid #6487bd;
  border-radius: 2px;
}
.modes button {
  display: flex;
  align-items: center;
  justify-content: center;
  width: 18px;
  height: 17px;
  background: #c8dbf5;
}
.modes .on {
  background: linear-gradient(#fbd596, #ffc957 50%, #ffe99b);
}
.pct-label {
  width: 47px;
  padding-left: 9px;
  white-space: nowrap;
}
.round {
  flex: none;
}
.view input {
  flex: 1;
  min-width: 0;
  height: 16px;
  background: linear-gradient(transparent 7px, #5d80b5 7px 8px, #e4eefb 8px 9px, transparent 9px);
  appearance: none;
}
.view input::-webkit-slider-thumb {
  width: 9px;
  height: 14px;
  border: 1px solid #3d5e92;
  border-radius: 1px 1px 5px 5px;
  background: linear-gradient(90deg, #fff, #b9c9e0);
  appearance: none;
}
</style>
